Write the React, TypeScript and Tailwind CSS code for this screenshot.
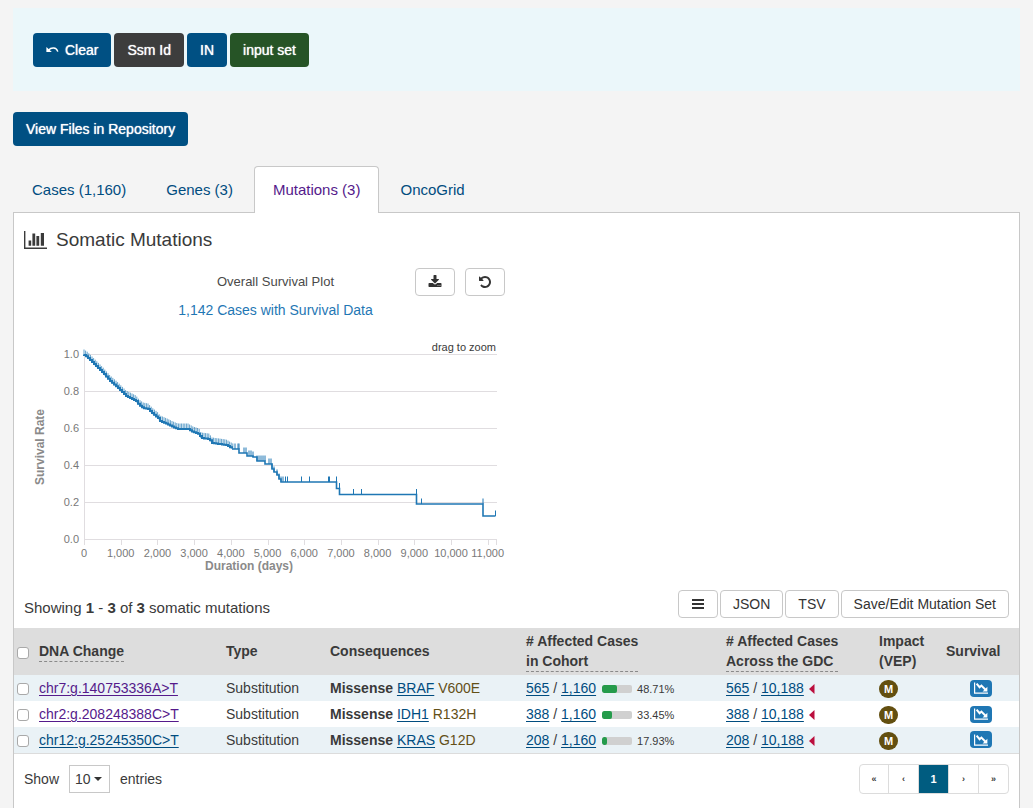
import React from "react";

type Point = [number, number];

const denseCurve: Point[] = [
  [70, 25], [73, 27], [80, 34], [89, 43], [96, 51], [104, 58], [112, 66],
  [122, 71], [125, 75], [129, 78], [134, 79], [139, 84], [144, 88], [146, 91],
  [153, 94], [159, 97], [164, 99], [174, 99], [179, 102], [185, 104], [187, 108],
  [195, 109], [198, 113], [212, 115], [219, 119],
];

const sparseCurve: Point[] = [
  [219, 119], [225, 123], [233, 123], [233, 126], [239, 127], [243, 131], [251, 131],
  [251, 134], [257, 134], [258, 139], [260, 142], [263, 145], [265, 149], [267, 152],
  [322.5, 152], [322.5, 158.5], [325.5, 158.5], [325.5, 164.5], [402.5, 164.5],
  [402.5, 174], [469, 174], [469, 186], [481.5, 186],
];

const sparseMarks: Point[] = [
  [221, 119], [224, 119], [225, 119], [230, 123], [232, 123], [235, 126], [237, 126], [239, 127],
  [243, 131], [245, 131], [247, 131], [249, 131], [251, 131], [255, 134], [257, 134],
  [258, 139], [260, 142], [263, 145], [265, 149], [267, 152], [269, 152], [271.5, 152],
  [273.5, 152], [287.5, 152], [295.5, 152], [314.5, 152], [315.5, 152], [322.5, 152],
  [325.5, 158.5], [339.5, 164.5], [347.5, 164.5], [402.5, 164.5], [407.5, 174],
  [469, 174], [481.5, 186],
];

function heightAt(x: number): number {
  for (let i = 1; i < denseCurve.length; i++) {
    const [x0, y0] = denseCurve[i - 1];
    const [x1, y1] = denseCurve[i];
    if (x <= x1) return y0 + ((y1 - y0) * (x - x0)) / (x1 - x0);
  }
  return denseCurve[denseCurve.length - 1][1];
}

const steps: number[] = [];
for (let x = 70; x <= 219; x += 2) steps.push(x);

const denseMarks: number[] = [];
for (let x = 70; x <= 219; x += 1.6) denseMarks.push(x);

const densePath =
  "M70 24.5" + steps.map((x) => `H${x}V${heightAt(x).toFixed(1)}`).join("");

const sparsePath =
  "M218 119" + sparseCurve.map(([x, y]) => `H${x}V${y}`).join("");

const denseMarksPath = denseMarks
  .map((x) => `M${x.toFixed(1)} ${(heightAt(x) + 0.5).toFixed(1)}v-6`)
  .join("");

const sparseMarksPath = sparseMarks.map(([x, y]) => `M${x} ${y}v-5.5`).join("");

const yTicks = ["1.0", "0.8", "0.6", "0.4", "0.2", "0.0"];
const xTicks = [
  "0", "1,000", "2,000", "3,000", "4,000", "5,000",
  "6,000", "7,000", "8,000", "9,000", "10,000", "11,000",
];

function SurvivalChart() {
  return (
    <svg viewBox="0 0 491 250" className="block w-full" role="img" aria-label="Overall survival plot">
      <g stroke="#e0dde0" fill="none">
        {yTicks.map((t, i) => (
          <path key={t} d={`M70 ${24.5 + i * 37}H483`} />
        ))}
        <path d="M70.5 24V215" />
        <path d="M482.5 209V215" />
        {xTicks.map((t, i) => (
          <path key={t} d={`M${Math.round(70 + i * 36.7) + 0.5} 209v6`} />
        ))}
      </g>
      <g fill="#787878" fontSize="11">
        {yTicks.map((t, i) => (
          <text key={t} x="65" y={28 + i * 37} textAnchor="end">{t}</text>
        ))}
        {xTicks.map((t, i) => (
          <text key={t} x={70 + i * 36.7} y="227" textAnchor="middle">{t}</text>
        ))}
      </g>
      <g fill="#8a8a8a" fontSize="12" fontWeight="bold" textAnchor="middle">
        <text x="235" y="240">Duration (days)</text>
        <text transform="translate(30 117) rotate(-90)">Survival Rate</text>
      </g>
      <text x="482" y="21" fontSize="11" fill="#3a3a3a" textAnchor="end">drag to zoom</text>
      <g stroke="#1f77b4" fill="none">
        <path d={denseMarksPath} strokeOpacity="0.7" />
        <path d={sparseMarksPath} />
        <path d={densePath} strokeWidth="2" />
        <path d={sparsePath} strokeWidth="1.6" />
      </g>
    </svg>
  );
}

function UndoArrow() {
  return (
    <svg viewBox="0 0 13 8" className="h-2 w-[13px]" aria-hidden="true">
      <path d="M2.5 4.2C5 1.2 10.5.8 11.8 5.6" fill="none" stroke="currentColor" strokeWidth="1.4" />
      <path d="M.4 1v5h5.4z" fill="currentColor" />
    </svg>
  );
}

function BarChartIcon() {
  return (
    <svg viewBox="0 0 23 18" className="h-[18px] w-[23px]" fill="currentColor" aria-hidden="true">
      <path d="M0 0h1.4v16.4H23V18H0z" />
      <path d="M4.6 9.5H7.2v5.2H4.6zM8.4 2.6h2.8v12.1H8.4zM12.4 5h2.8v9.7h-2.8zM16.8 2H20v12.7h-3.2z" />
    </svg>
  );
}

function DownloadIcon() {
  return (
    <svg viewBox="0 0 1792 1792" className="size-3.5" fill="currentColor" aria-hidden="true">
      <path d="M1344 1344q0-26-19-45t-45-19-45 19-19 45 19 45 45 19 45-19 19-45zm256 0q0-26-19-45t-45-19-45 19-19 45 19 45 45 19 45-19 19-45zm128-224v320q0 40-28 68t-68 28h-1472q-40 0-68-28t-28-68v-320q0-40 28-68t68-28h465l135 136q58 56 136 56t136-56l136-136h464q40 0 68 28t28 68zm-325-569q17 41-14 70l-448 448q-18 19-45 19t-45-19l-448-448q-31-29-14-70 17-39 59-39h256v-448q0-26 19-45t45-19h256q26 0 45 19t19 45v448h256q42 0 59 39z" />
    </svg>
  );
}

function ResetIcon() {
  return (
    <svg viewBox="0 0 1792 1792" className="size-3.5" fill="currentColor" aria-hidden="true">
      <path d="M1664 896q0 156-61 298t-164 245-245 164-298 61q-172 0-327-72.5t-264-204.5q-7-10-6.5-22.5t8.5-20.5l137-138q10-9 25-9 16 2 23 12 73 95 179 147t225 52q104 0 198.5-40.5t163.5-109.5 109.5-163.5 40.5-198.5-40.5-198.5-109.5-163.5-163.5-109.5-198.5-40.5q-98 0-188 35.5t-160 101.5l137 138q31 30 14 69-17 40-59 40h-448q-26 0-45-19t-19-45v-448q0-42 40-59 39-17 69 14l130 129q107-101 244.5-156.5t284.5-55.5q156 0 298 61t245 164 164 245 61 298z" />
    </svg>
  );
}

function MenuIcon() {
  return (
    <svg viewBox="0 0 12 10" className="h-2.5 w-3" fill="currentColor" aria-hidden="true">
      <path d="M0 0h12v2H0zM0 4h12v2H0zM0 8h12v2H0z" />
    </svg>
  );
}

function DeclineIcon() {
  return (
    <svg viewBox="0 0 14 12" className="h-3 w-3.5" aria-hidden="true">
      <path d="M.6 .5v10.6H14" fill="none" stroke="currentColor" strokeWidth="1.2" />
      <path d="M2.6 1.6l3 3.6 1.8-1.6 4.4 4.4" fill="none" stroke="currentColor" strokeWidth="2" />
      <path d="M13.4 4.8v4.8H8.6z" fill="currentColor" />
    </svg>
  );
}

const filled =
  "flex h-[34px] items-center justify-center gap-1.5 rounded px-[13px] text-white [text-shadow:0_0_1px_#fff]";
const outlined =
  "flex h-7 items-center justify-center rounded border border-[#c8c8c8] bg-white px-3 text-[#333]";
const link = "text-[#004c7f] underline underline-offset-2";

const tabs = [
  { label: "Cases (1,160)", active: false },
  { label: "Genes (3)", active: false },
  { label: "Mutations (3)", active: true },
  { label: "OncoGrid", active: false },
];

const rows = [
  { dna: "chr7:g.140753336A>T", visited: true, gene: "BRAF", change: "V600E", count: 565, percent: 48.71 },
  { dna: "chr2:g.208248388C>T", visited: true, gene: "IDH1", change: "R132H", count: 388, percent: 33.45 },
  { dna: "chr12:g.25245350C>T", visited: false, gene: "KRAS", change: "G12D", count: 208, percent: 17.93 },
];

function Check({ label }: { label: string }) {
  return (
    <input
      type="checkbox"
      aria-label={label}
      className="ml-[3px] mt-0.5 block size-3 appearance-none rounded-[3px] border border-[#a9a9a9] bg-white checked:bg-[#1f77b4]"
    />
  );
}

function MutationTable() {
  const hint = "inline-block border-b border-dashed border-[#8a8a8a] leading-5";
  return (
    <table className="w-full table-fixed border-b border-[#dcdcdc] text-left">
      <colgroup>
        <col className="w-[25px]" />
        <col className="w-[187px]" />
        <col className="w-[104px]" />
        <col className="w-[196px]" />
        <col className="w-[200px]" />
        <col className="w-[153px]" />
        <col className="w-[67px]" />
        <col className="w-[73px]" />
      </colgroup>
      <thead className="bg-[#dddddd]">
        <tr className="h-[47px]">
          <th><Check label="Select all mutations" /></th>
          <th><span className={hint}>DNA Change</span></th>
          <th className="pb-0.5">Type</th>
          <th className="pb-0.5">Consequences</th>
          <th><span className={hint}># Affected Cases<br />in Cohort</span></th>
          <th><span className={hint}># Affected Cases<br />Across the GDC</span></th>
          <th className="pb-0.5">Impact<br />(VEP)</th>
          <th className="pb-0.5">Survival</th>
        </tr>
      </thead>
      <tbody>
        {rows.map((r) => (
          <tr key={r.dna} className="h-[26px] whitespace-nowrap odd:bg-[#eaf2f6]">
            <td><Check label={`Select ${r.dna}`} /></td>
            <td>
              <a href="#mutation" className={r.visited ? "text-[#551a8b] underline underline-offset-2" : link}>{r.dna}</a>
            </td>
            <td>Substitution</td>
            <td>
              <b>Missense</b> <a href="#gene" className={link}>{r.gene}</a>{" "}
              <span className="text-[#634f16]">{r.change}</span>
            </td>
            <td>
              <div className="flex items-center">
                <span>
                  <a href="#cases" className={link}>{r.count}</a> / <a href="#cohort" className={link}>1,160</a>
                </span>
                <span className="ml-1.5 mt-0.5 h-2 w-[30px] overflow-hidden rounded-xs bg-[#d0d0d0]">
                  <span className="block h-full rounded-xs bg-[#259b4b]" style={{ width: `${r.percent}%` }} />
                </span>
                <span className="ml-[5px] mt-0.5 text-[11px]">{r.percent}%</span>
              </div>
            </td>
            <td>
              <div className="flex items-center">
                <span>
                  <a href="#cases" className={link}>{r.count}</a> / <a href="#all" className={link}>10,188</a>
                </span>
                <svg viewBox="0 0 6 10" className="ml-[5px] mt-0.5 h-2.5 w-1.5" aria-hidden="true">
                  <path d="M0 5l5.5-5v10z" fill="#bb0e3d" />
                </svg>
              </div>
            </td>
            <td>
              <span className="mt-0.5 flex h-[18px] w-[19px] items-center justify-center rounded-full bg-[#634f10] text-[11px] font-bold text-white">M</span>
            </td>
            <td>
              <button
                type="button"
                aria-label={`Plot survival for ${r.dna}`}
                className="ml-6 flex h-[17px] w-[22px] items-center justify-center rounded bg-[#1f77b4] text-white"
              >
                <DeclineIcon />
              </button>
            </td>
          </tr>
        ))}
      </tbody>
    </table>
  );
}

export default function App() {
  return (
    <div className="flex min-h-screen flex-col bg-[#f4f4f4] px-[13px] pt-2 font-['Liberation_Sans',Arial,sans-serif] text-[14px] leading-5 text-[#3a3a3a]">
      <div className="flex gap-[3px] bg-[#ebf7fa] px-5 pb-6 pt-[25px]">
        <button type="button" className={`${filled} bg-[#005083]`}><UndoArrow />Clear</button>
        <button type="button" className={`${filled} bg-[#3d3d3d]`}>Ssm Id</button>
        <button type="button" className={`${filled} bg-[#005083]`}>IN</button>
        <button type="button" className={`${filled} bg-[#265426]`}>input set</button>
      </div>

      <button type="button" className={`${filled} mt-[21px] self-start bg-[#005083]`}>
        View Files in Repository
      </button>

      <nav className="mt-5 flex gap-0.5 text-[15px]">
        {tabs.map((t) => (
          <a
            key={t.label}
            href="#tab"
            className={
              t.active
                ? "relative -mb-px flex h-[47px] items-center rounded-t border border-b-0 border-[#c8c8c8] bg-white px-[18px] text-[#551a8b]"
                : "flex h-[46px] items-center border border-b-0 border-transparent px-[18px] text-[#004c7f]"
            }
          >
            {t.label}
          </a>
        ))}
      </nav>

      <main className="flex-1 border border-b-0 border-[#c8c8c8] bg-white pb-10">
        <h1 className="flex items-center gap-[9px] px-2.5 pt-[13px] text-[19px] leading-7">
          <BarChartIcon />
          Somatic Mutations
        </h1>

        <section className="w-full max-w-[491px]">
          <div className="mt-3.5 grid grid-cols-[1fr_auto_1fr] items-center pl-8">
            <span className="col-start-2 text-[13px] text-[#4a4a4a]">Overall Survival Plot</span>
            <div className="flex justify-end gap-2.5">
              <button type="button" aria-label="Download plot" className={`${outlined} w-10`}><DownloadIcon /></button>
              <button type="button" aria-label="Reset zoom" className={`${outlined} w-10`}><ResetIcon /></button>
            </div>
          </div>
          <p className="mb-2.5 mt-1 pl-8 text-center text-[#1f77b4]">1,142 Cases with Survival Data</p>
          <SurvivalChart />
        </section>

        <div className="mb-2.5 mt-2.5 flex items-center justify-between px-2.5">
          <p className="pt-2 text-[15px]">
            Showing <b>1</b> - <b>3</b> of <b>3</b> somatic mutations
          </p>
          <div className="flex gap-0.5">
            <button type="button" aria-label="Arrange columns" className={`${outlined} w-10`}><MenuIcon /></button>
            <button type="button" className={outlined}>JSON</button>
            <button type="button" className={outlined}>TSV</button>
            <button type="button" className={outlined}>Save/Edit Mutation Set</button>
          </div>
        </div>

        <MutationTable />

        <div className="mt-2.5 flex items-center justify-between px-2.5">
          <div className="flex items-center gap-2.5">
            <label htmlFor="page-size">Show</label>
            <div className="relative">
              <select id="page-size" className="block h-7 w-[41px] appearance-none border border-[#c8c8c8] bg-white pl-[5px]">
                <option>10</option>
              </select>
              <svg viewBox="0 0 8 4" className="pointer-events-none absolute right-2 top-3 h-1 w-2" aria-hidden="true">
                <path d="M0 0h8L4 4z" fill="#333" />
              </svg>
            </div>
            <span>entries</span>
          </div>
          <div className="flex divide-x divide-[#dcdcdc] overflow-hidden rounded border border-[#dcdcdc] text-[9px] font-bold">
            <button type="button" aria-label="First page" className="h-7 w-[29px]">«</button>
            <button type="button" aria-label="Previous page" className="h-7 w-[30px]">‹</button>
            <button type="button" aria-current="page" className="h-7 w-[30px] bg-[#005c80] text-[11px] text-white">1</button>
            <button type="button" aria-label="Next page" className="h-7 w-[30px]">›</button>
            <button type="button" aria-label="Last page" className="h-7 w-[29px]">»</button>
          </div>
        </div>
      </main>
    </div>
  );
}
